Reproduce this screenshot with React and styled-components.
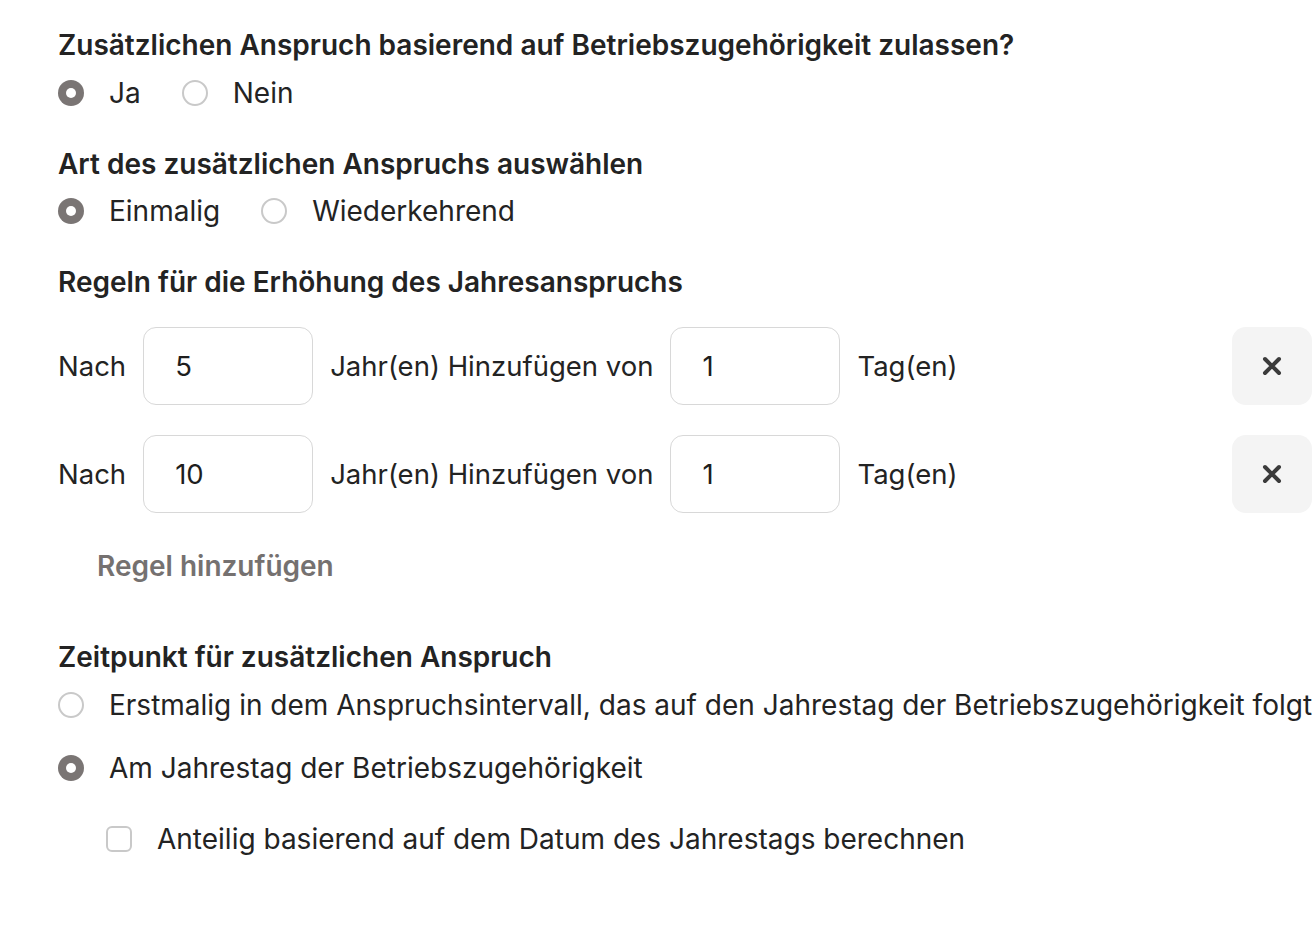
import React from "react";
import styled, { createGlobalStyle } from "styled-components";

const Global = createGlobalStyle`
  html, body { margin: 0; padding: 0; background: #fff; overflow: hidden; }
  body { font-family: Inter, "Noto Sans", sans-serif; color: #232323; }
  * { box-sizing: border-box; }
`;

const Page = styled.div`
  width: 1312px;
  padding: 29px 0 0 58px;
  display: flex;
  flex-direction: column;
`;

const Heading = styled.div`
  font-size: 28px;
  line-height: 32px;
  font-weight: 600;
  color: #232323;
  margin-top: ${(p) => p.$mt || 0}px;
  white-space: nowrap;
`;

const RadioGroup = styled.div`
  display: flex;
  flex-direction: ${(p) => (p.$column ? "column" : "row")};
  gap: ${(p) => (p.$column ? 31 : 41)}px;
  margin-top: ${(p) => p.$mt || 0}px;
`;

const OptionRow = styled.label`
  display: flex;
  align-items: center;
  gap: 25px;
  font-size: 28px;
  line-height: 32px;
  color: #232323;
  white-space: nowrap;
  margin-left: ${(p) => p.$indent || 0}px;
  margin-top: ${(p) => p.$mt || 0}px;
`;

const RadioCircle = styled.span`
  width: 26px;
  height: 26px;
  border-radius: 50%;
  flex: none;
  display: flex;
  align-items: center;
  justify-content: center;
  ${(p) =>
    p.$checked
      ? `background: #7a7574;`
      : `border: 2px solid #c9c9c9; background: #fff;`}
  &::after {
    content: "";
    width: 10px;
    height: 10px;
    border-radius: 50%;
    background: #fff;
    display: ${(p) => (p.$checked ? "block" : "none")};
  }
`;

const CheckBox = styled.span`
  width: 26px;
  height: 26px;
  border-radius: 6px;
  border: 2px solid #c9c9c9;
  flex: none;
  background: #fff;
`;

const Rules = styled.div`
  display: flex;
  flex-direction: column;
  gap: 30px;
  margin-top: 29px;
  width: 1254px;
`;

const RuleRow = styled.div`
  display: flex;
  align-items: center;
  gap: 17px;
  font-size: 27.5px;
  color: #232323;
  white-space: nowrap;
`;

const NumberBox = styled.div`
  width: 170px;
  height: 78px;
  border: 1.5px solid #d8d8d8;
  border-radius: 13px;
  padding-left: 31px;
  display: flex;
  align-items: center;
  font-size: 27.5px;
  color: #1e1e1e;
`;

const Spacer = styled.div`
  flex: 1;
`;

const RemoveButton = styled.button`
  width: 80px;
  height: 78px;
  border: none;
  border-radius: 14px;
  background: #f4f4f4;
  display: flex;
  align-items: center;
  justify-content: center;
  padding: 0;
  cursor: pointer;
`;

const AddRule = styled.button`
  align-self: flex-start;
  height: 56px;
  margin-top: 25px;
  padding: 0 39px;
  border: none;
  background: transparent;
  font-family: Inter, "Noto Sans", sans-serif;
  font-size: 28px;
  font-weight: 600;
  color: #757170;
  cursor: pointer;
`;

const XIcon = () => (
  <svg width="22" height="22" viewBox="0 0 22 22">
    <path
      d="M4 4 L18 18 M18 4 L4 18"
      stroke="#3b3b3b"
      strokeWidth="4"
      strokeLinecap="round"
    />
  </svg>
);

const rules = [
  { years: "5", days: "1" },
  { years: "10", days: "1" },
];

export default function App() {
  return (
    <>
      <Global />
      <Page>
        <Heading>Zusätzlichen Anspruch basierend auf Betriebszugehörigkeit zulassen?</Heading>
        <RadioGroup $mt={16}>
          <OptionRow>
            <RadioCircle $checked />
            Ja
          </OptionRow>
          <OptionRow>
            <RadioCircle />
            Nein
          </OptionRow>
        </RadioGroup>

        <Heading $mt={39}>Art des zusätzlichen Anspruchs auswählen</Heading>
        <RadioGroup $mt={15}>
          <OptionRow>
            <RadioCircle $checked />
            Einmalig
          </OptionRow>
          <OptionRow>
            <RadioCircle />
            Wiederkehrend
          </OptionRow>
        </RadioGroup>

        <Heading $mt={39}>Regeln für die Erhöhung des Jahresanspruchs</Heading>
        <Rules>
          {rules.map((r, i) => (
            <RuleRow key={i}>
              <span>Nach</span>
              <NumberBox>{r.years}</NumberBox>
              <span>Jahr(en) Hinzufügen von</span>
              <NumberBox>{r.days}</NumberBox>
              <span>Tag(en)</span>
              <Spacer />
              <RemoveButton aria-label="Entfernen">
                <XIcon />
              </RemoveButton>
            </RuleRow>
          ))}
        </Rules>
        <AddRule>Regel hinzufügen</AddRule>

        <Heading $mt={47}>Zeitpunkt für zusätzlichen Anspruch</Heading>
        <RadioGroup $column $mt={16}>
          <OptionRow>
            <RadioCircle />
            Erstmalig in dem Anspruchsintervall, das auf den Jahrestag der Betriebszugehörigkeit folgt
          </OptionRow>
          <OptionRow>
            <RadioCircle $checked />
            Am Jahrestag der Betriebszugehörigkeit
          </OptionRow>
        </RadioGroup>
        <OptionRow $indent={48} $mt={39}>
          <CheckBox />
          Anteilig basierend auf dem Datum des Jahrestags berechnen
        </OptionRow>
      </Page>
    </>
  );
}
